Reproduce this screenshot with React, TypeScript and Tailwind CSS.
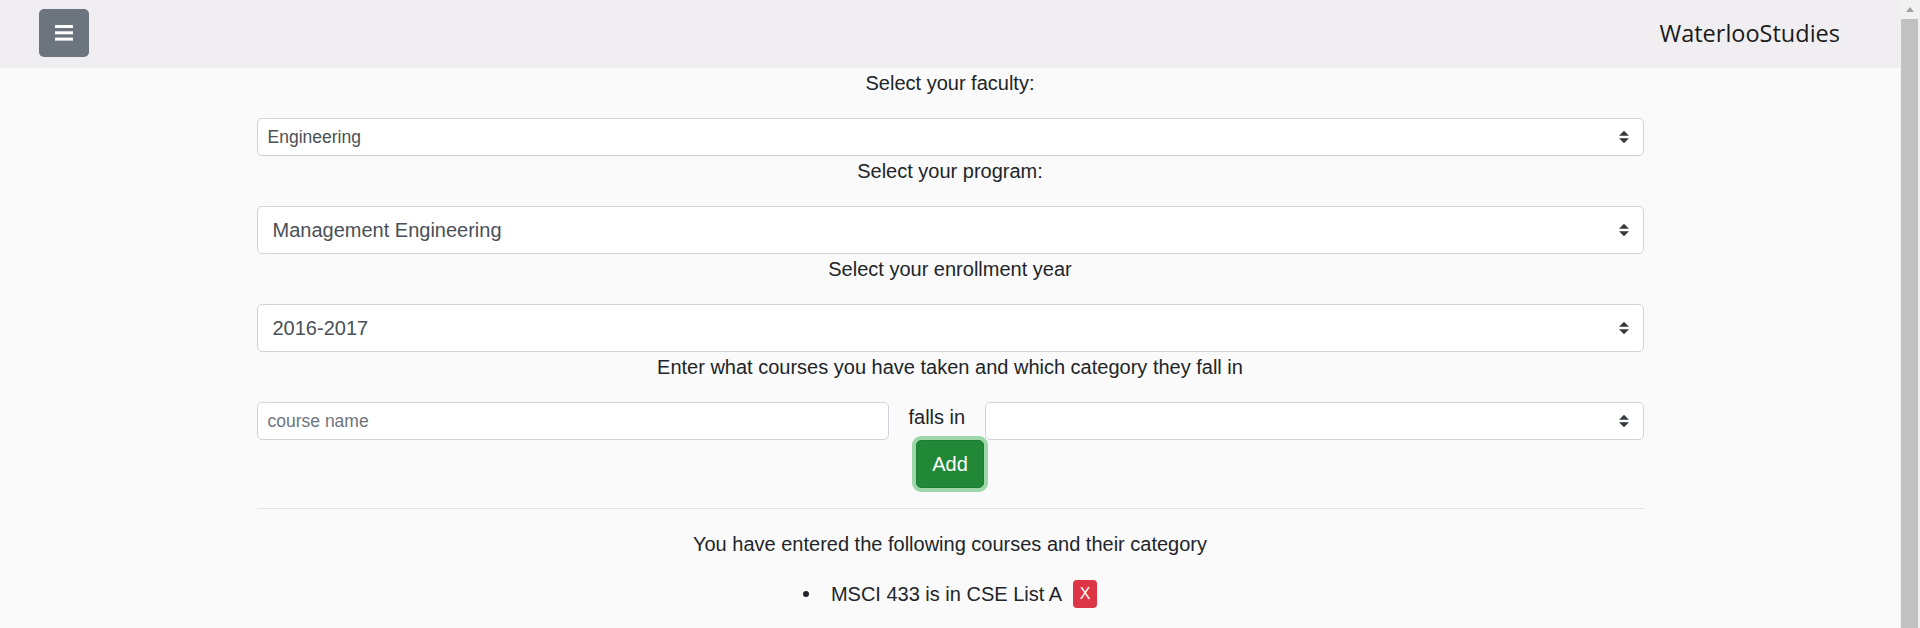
import { useState } from "react";

const body = "font-['Liberation_Sans',Arial,sans-serif]";

function Chevrons() {
  return (
    <svg
      viewBox="0 0 4 5"
      className="pointer-events-none absolute right-[15px] top-1/2 h-[12.5px] w-[10px] -translate-y-1/2"
    >
      <path fill="#343a40" d="M2 0L0 2h4zm0 5L0 3h4z" />
    </svg>
  );
}

function Select({
  value,
  options,
  small,
}: {
  value: string;
  options: string[];
  small?: boolean;
}) {
  return (
    <div className="relative w-full">
      <select
        defaultValue={value}
        className={`block w-full appearance-none rounded-[5px] border border-[#ced4da] bg-white text-[#495057] outline-none ${body} ${
          small
            ? "h-[38px] pl-[10px] pr-[35px] text-[17.5px]"
            : "h-[48px] pl-[15px] pr-[40px] text-[20px]"
        }`}
      >
        {options.map((o) => (
          <option key={o} value={o}>
            {o}
          </option>
        ))}
      </select>
      <Chevrons />
    </div>
  );
}

export default function App() {
  const [courses, setCourses] = useState([
    { name: "MSCI 433", category: "CSE List A" },
  ]);

  return (
    <div className="flex h-[628px] w-[1920px] overflow-hidden bg-[#fafafa]">
      <div className="flex-1">
        <nav className="flex h-[68px] items-center justify-between bg-[#f0eef0] pl-[39px] pr-[60px]">
          <button className="flex h-[48px] w-[50px] -translate-y-[1px] items-center justify-center rounded-[5px] bg-[#6c757d]">
            <svg viewBox="0 0 18 16" className="h-[16px] w-[18px]">
              <rect x="0" y="0" width="18" height="3" fill="#fff" />
              <rect x="0" y="6.3" width="18" height="3" fill="#fff" />
              <rect x="0" y="12.6" width="18" height="3" fill="#fff" />
            </svg>
          </button>
          <span className="font-['Open_Sans',sans-serif] text-[23.5px] text-[#1a1a1a]">
            WaterlooStudies
          </span>
        </nav>

        <main
          className={`mx-auto w-[1387px] text-center text-[20px] leading-[30px] text-[#212529] ${body}`}
        >
          <p className="mb-[20px]">Select your faculty:</p>
          <Select small value="Engineering" options={["Engineering", "Mathematics", "Science"]} />
          <p className="mb-[20px]">Select your program:</p>
          <Select
            value="Management Engineering"
            options={["Management Engineering", "Systems Design Engineering"]}
          />
          <p className="mb-[20px]">Select your enrollment year</p>
          <Select value="2016-2017" options={["2016-2017", "2017-2018"]} />
          <p className="mb-[20px]">
            Enter what courses you have taken and which category they fall in
          </p>

          <div className="flex items-start">
            <input
              placeholder="course name"
              className={`h-[38px] w-[632px] rounded-[5px] border border-[#ced4da] bg-white px-[10px] text-[17.5px] text-[#495057] outline-none placeholder:text-[#6c757d] ${body}`}
            />
            <span className="px-[20px]">falls in</span>
            <div className="flex-1">
              <Select small value="" options={[""]} />
            </div>
          </div>

          <button className="mx-auto block h-[48px] rounded-[5px] border border-[#1e7e34] bg-[#218838] px-[15px] text-[20px] text-white ring-4 ring-[#9dd6a8]">
            Add
          </button>

          <div className="mt-[20px] h-px bg-[#e1e1e1]" />

          <p className="mt-[20px] mb-[20px]">
            You have entered the following courses and their category
          </p>
          <ul>
            {courses.map((c, i) => (
              <li key={c.name} className="flex items-center justify-center">
                <span className="mr-[22px] h-[6px] w-[6px] rounded-full bg-[#212529]" />
                <span>
                  {c.name} is in {c.category}
                </span>
                <button
                  onClick={() => setCourses(courses.filter((_, j) => j !== i))}
                  className="ml-[11px] flex h-[28px] w-[24px] items-center justify-center rounded-[4px] bg-[#dc3545] text-[16px] text-white"
                >
                  X
                </button>
              </li>
            ))}
          </ul>
        </main>
      </div>

      <div className="flex w-[20px] flex-col bg-[#f1f1f1]">
        <div className="flex h-[19px] items-center justify-center">
          <svg viewBox="0 0 8 5" className="h-[5px] w-[8px]">
            <path d="M4 0L8 5H0z" fill="#a3a3a3" />
          </svg>
        </div>
        <div className="ml-[1px] mr-[2px] flex-1 bg-[#c1c1c1]" />
      </div>
    </div>
  );
}
